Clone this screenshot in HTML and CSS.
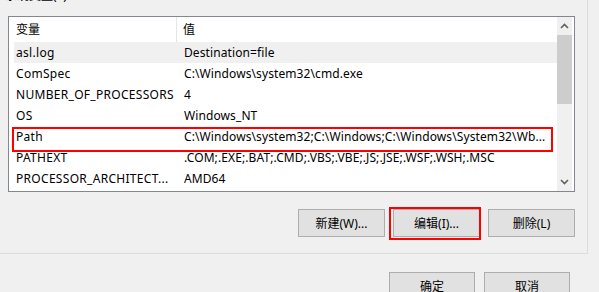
FILE: index.html
```html
<!DOCTYPE html>
<html lang="zh-CN">
<head>
  <meta charset="UTF-8">
  <title>环境变量</title>
  <link rel="stylesheet" href="styles.css">
</head>
<body>
  <div class="group">
    <div class="group-title">系统变量(S)</div>

    <div class="listview">
      <div class="list-main">
        <div class="list-head">
          <div class="head-cell">变量</div>
          <div class="head-cell">值</div>
        </div>
        <div class="row hot"><span>asl.log</span><span>Destination=file</span></div>
        <div class="row"><span>ComSpec</span><span>C:\Windows\system32\cmd.exe</span></div>
        <div class="row"><span>NUMBER_OF_PROCESSORS</span><span>4</span></div>
        <div class="row"><span>OS</span><span>Windows_NT</span></div>
        <div class="row marked"><span>Path</span><span>C:\Windows\system32;C:\Windows;C:\Windows\System32\Wb...</span></div>
        <div class="row"><span>PATHEXT</span><span>.COM;.EXE;.BAT;.CMD;.VBS;.VBE;.JS;.JSE;.WSF;.WSH;.MSC</span></div>
        <div class="row"><span>PROCESSOR_ARCHITECT...</span><span>AMD64</span></div>
      </div>
      <div class="scrollbar">
        <div class="scroll-btn">
          <svg width="9" height="6" viewBox="0 0 9 6"><path d="M1 5 L4.5 1.5 L8 5" fill="none" stroke="#606060" stroke-width="1.6"/></svg>
        </div>
        <div class="scroll-track">
          <div class="scroll-thumb"></div>
        </div>
        <div class="scroll-btn">
          <svg width="9" height="6" viewBox="0 0 9 6"><path d="M1 1 L4.5 4.5 L8 1" fill="none" stroke="#606060" stroke-width="1.6"/></svg>
        </div>
      </div>
    </div>

    <div class="group-actions">
      <button class="btn">新建(W)...</button>
      <button class="btn marked-btn">编辑(I)...<span class="mark"></span></button>
      <button class="btn">删除(L)</button>
    </div>
  </div>

  <div class="dialog-actions">
    <button class="btn">确定</button>
    <button class="btn">取消</button>
  </div>
</body>
</html>
```

FILE: styles.css
```css
* {
  margin: 0;
  padding: 0;
  box-sizing: border-box;
}

html, body {
  width: 599px;
  height: 292px;
  overflow: hidden;
}

body {
  background: #f0f0f0;
  color: #000;
  font-family: "Noto Sans", "Noto Sans CJK SC", sans-serif;
  font-size: 12px;
}

.group {
  margin: -20px 11px 0 -1px;
  border: 1px solid #dcdcdc;
  padding: 0 12px 16px 8px;
}

.group-title {
  margin: 7px 0 12px -3px;
  line-height: 16px;
}

.listview {
  display: flex;
  height: 176px;
  border: 1px solid #828790;
  background: #fff;
}

.list-main {
  flex: 1;
  overflow: hidden;
}

.list-head {
  display: flex;
  height: 25px;
}

.head-cell {
  line-height: 25px;
  padding-left: 7px;
  white-space: nowrap;
}

.head-cell:first-child {
  width: 168px;
  border-right: 1px solid #e5e5e5;
}

.head-cell:last-child {
  padding-left: 6px;
}

.row {
  display: grid;
  grid-template-columns: 168px 1fr;
  height: 21px;
  line-height: 21px;
  margin-left: 5px;
  padding-left: 2px;
  white-space: nowrap;
  position: relative;
}

.row span {
  overflow: hidden;
  letter-spacing: 0.1px;
}

.row span:first-child {
  letter-spacing: 0.3px;
}

.row.hot {
  background: #f0f0f0;
}

.row.marked::after {
  content: "";
  position: absolute;
  top: 1px;
  bottom: -5px;
  left: -2px;
  right: 4px;
  border: 2px solid #f00;
}

.scrollbar {
  width: 15px;
  margin-right: 2px;
  display: flex;
  flex-direction: column;
  background: #f0f0f0;
}

.scroll-btn {
  height: 18px;
  display: flex;
  align-items: center;
  justify-content: center;
}

.scroll-track {
  flex: 1;
}

.scroll-thumb {
  height: 69px;
  background: #cdcdcd;
}

.group-actions {
  display: flex;
  justify-content: flex-end;
  gap: 8px;
  margin-top: 17px;
}

.btn {
  position: relative;
  width: 87px;
  height: 28px;
  border: 1px solid #adadad;
  background: #e1e1e1;
  font: inherit;
  color: #000;
}

.mark {
  position: absolute;
  top: -3px;
  bottom: -4px;
  left: -5px;
  right: -2px;
  border: 2px solid #f00;
}

.dialog-actions {
  display: flex;
  justify-content: flex-end;
  gap: 9px;
  margin: 18px 29px 0 0;
}

.dialog-actions .btn {
  width: 86px;
}
```
